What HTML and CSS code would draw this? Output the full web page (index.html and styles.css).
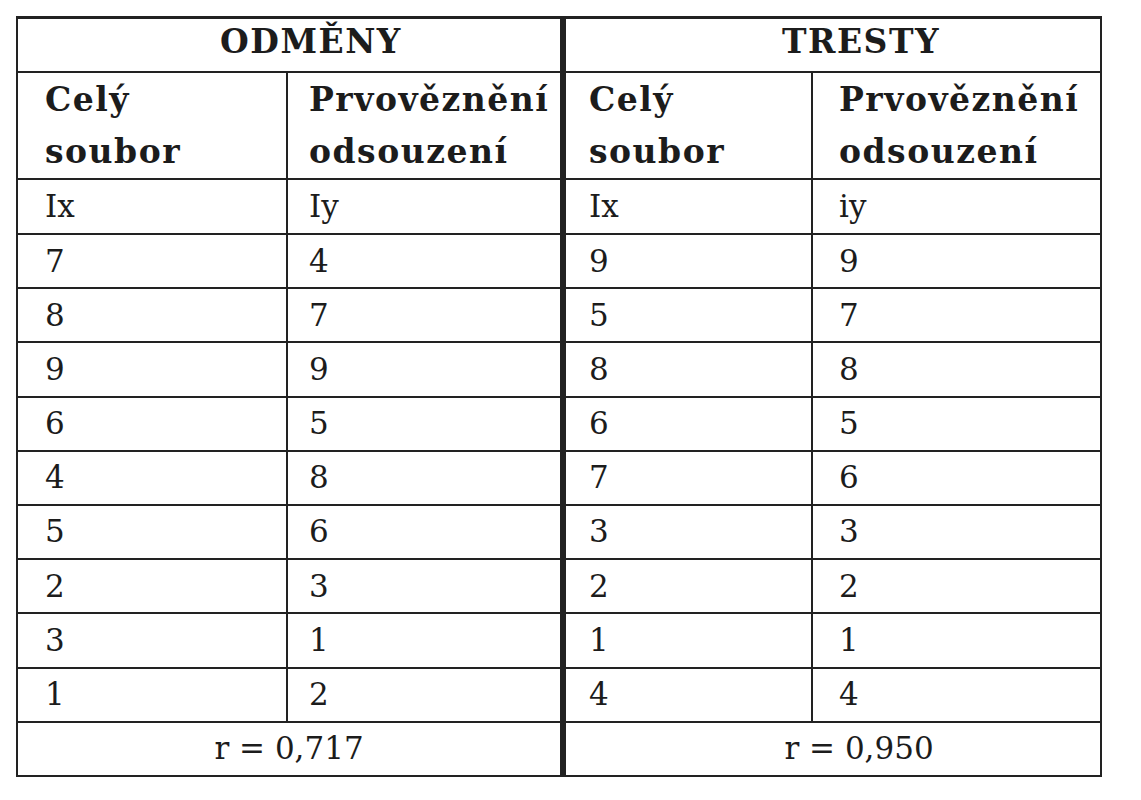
FILE: index.html
```html
<!DOCTYPE html>
<html lang="cs">
<head>
<meta charset="utf-8">
<title>Odměny a tresty</title>
<link rel="stylesheet" href="styles.css">
</head>
<body>
<table class="grid">
  <colgroup>
    <col class="c1"><col class="c2"><col class="c3"><col class="c4">
  </colgroup>
  <tr class="r-title">
    <th colspan="2" class="title title-left mid">ODMĚNY</th>
    <th colspan="2" class="title title-right">TRESTY</th>
  </tr>
  <tr class="r-head">
    <th class="p1 h">Celý<br>soubor</th>
    <th class="p2 h mid">Prvověznění<br>odsouzení</th>
    <th class="p3 h">Celý<br>soubor</th>
    <th class="p4 h">Prvověznění<br>odsouzení</th>
  </tr>
  <tr class="r-sub">
    <td class="p1">Ix</td><td class="p2 mid">Iy</td><td class="p3">Ix</td><td class="p4">iy</td>
  </tr>
  <tr class="r-data"><td class="p1">7</td><td class="p2 mid">4</td><td class="p3">9</td><td class="p4">9</td></tr>
  <tr class="r-data"><td class="p1">8</td><td class="p2 mid">7</td><td class="p3">5</td><td class="p4">7</td></tr>
  <tr class="r-data"><td class="p1">9</td><td class="p2 mid">9</td><td class="p3">8</td><td class="p4">8</td></tr>
  <tr class="r-data"><td class="p1">6</td><td class="p2 mid">5</td><td class="p3">6</td><td class="p4">5</td></tr>
  <tr class="r-data"><td class="p1">4</td><td class="p2 mid">8</td><td class="p3">7</td><td class="p4">6</td></tr>
  <tr class="r-data"><td class="p1">5</td><td class="p2 mid">6</td><td class="p3">3</td><td class="p4">3</td></tr>
  <tr class="r-data"><td class="p1">2</td><td class="p2 mid">3</td><td class="p3">2</td><td class="p4">2</td></tr>
  <tr class="r-data"><td class="p1">3</td><td class="p2 mid">1</td><td class="p3">1</td><td class="p4">1</td></tr>
  <tr class="r-data"><td class="p1">1</td><td class="p2 mid">2</td><td class="p3">4</td><td class="p4">4</td></tr>
  <tr class="r-sum">
    <td colspan="2" class="sum sum-left mid">r = 0,717</td>
    <td colspan="2" class="sum sum-right">r = 0,950</td>
  </tr>
</table>
</body>
</html>
```

FILE: styles.css
```css
html, body {
  margin: 0;
  padding: 0;
  background: #ffffff;
}

body {
  font-family: "DejaVu Serif", "Liberation Serif", serif;
  color: #1c1c1c;
}

.grid {
  margin: 16px 0 0 16px;
  border-collapse: separate;
  border-spacing: 0;
  table-layout: fixed;
  width: 1086px;
  border-top: 3px solid #222;
  border-left: 2px solid #222;
}

.c1 { width: 270px; }
.c2 { width: 278px; }
.c3 { width: 247px; }
.c4 { width: 289px; }

.grid th,
.grid td {
  border-right: 2px solid #222;
  border-bottom: 2px solid #222;
  padding: 0;
  text-align: left;
  vertical-align: middle;
  font-size: 31px;
  font-weight: normal;
  line-height: 1.2;
  white-space: nowrap;
}

.grid .mid {
  border-right: 6px solid #222;
}

.r-title { height: 54px; }
.r-head { height: 107px; }
.r-sub { height: 55px; }
.r-data { height: 54.2px; }
.r-sum { height: 54px; }

.grid .title {
  font-weight: bold;
  font-size: 33px;
  letter-spacing: 1.5px;
  text-align: center;
  padding-bottom: 6px;
}

.grid .title-left { padding-left: 44px; }
.grid .title-right { padding-left: 56px; }

.grid .h {
  font-weight: bold;
  font-size: 33px;
  letter-spacing: 1.5px;
  line-height: 52px;
}

.grid .sum {
  text-align: center;
}

.grid .sum-left { padding-left: 0; }
.grid .sum-right { padding-left: 52px; }

.grid .p1 { padding-left: 27px; }
.grid .p2 { padding-left: 21px; }
.grid .p3 { padding-left: 23px; }
.grid .p4 { padding-left: 26px; }
```
